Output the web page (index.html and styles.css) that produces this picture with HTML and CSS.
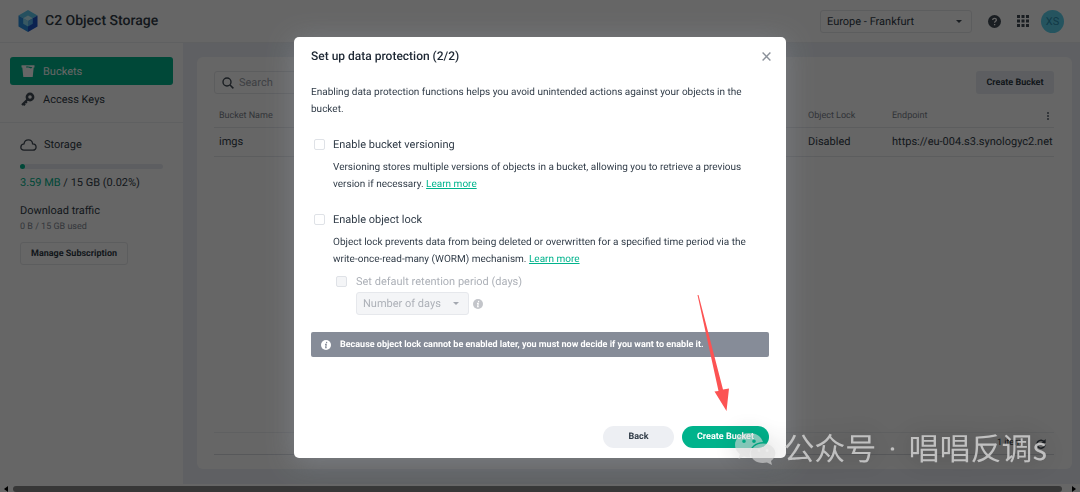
FILE: index.html
```
<!DOCTYPE html>
<html lang="en">
<head>
    <meta charset="UTF-8">
    <meta name="viewport" content="width=device-width, initial-scale=1.0">
    <title>C2 Object Storage</title>
    <link rel="stylesheet" href="styles.css">
</head>
<body>

    <div id="app">
        <header>
            <svg class="logo" viewBox="0 0 20 22">
                <path d="M10 0 L19.5 5.5 L10 11 L.5 5.5Z" fill="#5cc8ee"/>
                <path d="M.5 5.5 L10 11 V22 L.5 16.5Z" fill="#2a8fe0"/>
                <path d="M19.5 5.5 L10 11 V22 L19.5 16.5Z" fill="#1c55c8"/>
                <path d="M10 5.5 L14.8 8.2 L10 11 L5.2 8.2Z" fill="#c4f0fb"/>
                <path d="M5.2 8.2 L10 11 V16.4 L5.2 13.7Z" fill="#8adcf6"/>
                <path d="M14.8 8.2 L10 11 V16.4 L14.8 13.7Z" fill="#57b4ee"/>
            </svg>
            <h1>C2 Object Storage</h1>
            <div class="select region">
                <select aria-label="Region">
                    <option>Europe - Frankfurt</option>
                </select>
                <svg class="caret" viewBox="0 0 6 3"><path d="M0 0H6L3 3Z"/></svg>
            </div>
            <button class="icon-button" aria-label="Help">
                <svg width="13" height="13" viewBox="0 0 13 13">
                    <circle cx="6.5" cy="6.5" r="6.5" fill="#414b55"/>
                    <path d="M4.7 5.1C4.7 2.7 8.4 2.8 8.4 5C8.4 6.3 6.6 6.3 6.6 7.7M6.6 8.9V10.2" fill="none" stroke="#fff" stroke-width="1.3"/>
                </svg>
            </button>
            <button class="icon-button" aria-label="Apps">
                <svg width="12" height="12" viewBox="0 0 12 12" fill="#414b55">
                    <path d="M0 0h3v3H0zM4.5 0h3v3h-3zM9 0h3v3H9zM0 4.5h3v3H0zM4.5 4.5h3v3h-3zM9 4.5h3v3H9zM0 9h3v3H0zM4.5 9h3v3h-3zM9 9h3v3H9z"/>
                </svg>
            </button>
            <button class="avatar">XS</button>
        </header>

        <div id="content">
            <aside>
                <nav>
                    <a href="#" class="active">
                        <svg width="14" height="14" viewBox="0 0 14 14" fill="#fff">
                            <path d="M.5 1.2H13.5V3.6H12.7L11.7 13H2.3L1.3 3.6H.5Z"/>
                            <path d="M5.5 2.2L11.5 3.2L10 4.6L7.5 3.6H5Z" fill="#00b38c"/>
                        </svg>
                        Buckets
                    </a>
                    <a href="#">
                        <svg width="14" height="14" viewBox="0 0 14 14">
                            <circle cx="9" cy="5" r="3.1" fill="none" stroke="#414b55" stroke-width="2.6"/>
                            <path d="M6.5 7.5L1 13M2.2 11.4L4 13.2M4.2 9.4L5.8 11" fill="none" stroke="#414b55" stroke-width="2.2"/>
                        </svg>
                        Access Keys
                    </a>
                </nav>
                <div class="usage">
                    <div class="storage">
                        <svg width="17" height="12" viewBox="0 0 17 12">
                            <path d="M4 11.2C-.2 11.2-.2 5.2 4 4.8C5 -.4 12-.2 12.6 4.8C17.2 4.8 17.2 11.2 12.8 11.2Z" fill="none" stroke="#414b55" stroke-width="1.3"/>
                        </svg>
                        Storage
                    </div>
                    <div class="bar"><div class="bar-fill"></div></div>
                    <div class="amount"><span>3.59 MB</span> / 15 GB (0.02%)</div>
                    <div class="traffic">Download traffic</div>
                    <div class="used">0 B / 15 GB used</div>
                    <button class="manage">Manage Subscription</button>
                </div>
            </aside>

            <main>
                <section class="card">
                    <div class="toolbar">
                        <label class="search">
                            <svg width="12" height="12" viewBox="0 0 12 12">
                                <circle cx="5" cy="5" r="4" fill="none" stroke="#414b55" stroke-width="1.4"/>
                                <path d="M8 8L11.4 11.4" stroke="#414b55" stroke-width="1.5"/>
                            </svg>
                            <input type="text" placeholder="Search" aria-label="Search">
                        </label>
                        <button class="create">Create Bucket</button>
                    </div>
                    <table>
                        <thead>
                            <tr>
                                <th class="name">Bucket Name</th>
                                <th class="lock">Object Lock</th>
                                <th class="endpoint"><div>Endpoint
                                    <svg width="2" height="8" viewBox="0 0 2 8" fill="#828994"><path d="M0 0h2v2H0zM0 3h2v2H0zM0 6h2v2H0z"/></svg>
                                </div></th>
                            </tr>
                        </thead>
                        <tbody>
                            <tr>
                                <td>imgs</td>
                                <td>Disabled</td>
                                <td>https://eu-004.s3.synologyc2.net</td>
                            </tr>
                        </tbody>
                    </table>
                    <div class="pager">
                        1 item
                        <svg width="10" height="10" viewBox="0 0 10 10">
                            <path d="M8.4 3A4 4 0 1 0 9 5.6" fill="none" stroke="#414b55" stroke-width="1.5"/>
                            <path d="M9.6 0V4H5.6Z" fill="#414b55"/>
                        </svg>
                    </div>
                </section>
            </main>
        </div>

        <div class="scrollbar">
            <svg width="4" height="6" viewBox="0 0 4 6"><path d="M4 0V6L0 3Z"/></svg>
            <div class="thumb"></div>
            <svg width="4" height="6" viewBox="0 0 4 6"><path d="M0 0V6L4 3Z"/></svg>
        </div>
    </div>

    <div id="overlay">
        <form class="dialog" role="dialog" aria-labelledby="dialogTitle">
            <div class="dialog-head">
                <h2 id="dialogTitle">Set up data protection (2/2)</h2>
                <button type="button" class="close" aria-label="Close">
                    <svg width="9" height="9" viewBox="0 0 9 9"><path d="M.6 .6L8.4 8.4M8.4 .6L.6 8.4" stroke="#8b919a" stroke-width="1.4"/></svg>
                </button>
            </div>
            <p>Enabling data protection functions helps you avoid unintended actions against your objects in the bucket.</p>

            <div class="option">
                <input type="checkbox" id="versioning">
                <label for="versioning">Enable bucket versioning</label>
                <p>Versioning stores multiple versions of objects in a bucket, allowing you to retrieve a previous version if necessary. <a href="#">Learn more</a></p>
            </div>

            <div class="option">
                <input type="checkbox" id="objectLock">
                <label for="objectLock">Enable object lock</label>
                <p>Object lock prevents data from being deleted or overwritten for a specified time period via the write-once-read-many (WORM) mechanism. <a href="#">Learn more</a></p>
                <div class="retention">
                    <input type="checkbox" id="retention" disabled>
                    <label for="retention">Set default retention period (days)</label>
                    <div class="period">
                        <div class="select">
                            <select aria-label="Number of days" disabled>
                                <option>Number of days</option>
                            </select>
                            <svg class="caret" viewBox="0 0 6 3"><path d="M0 0H6L3 3Z"/></svg>
                        </div>
                        <svg width="10" height="10" viewBox="0 0 10 10">
                            <circle cx="5" cy="5" r="5" fill="#c3c5ca"/>
                            <path d="M5.7 1.9L5.5 3.1M4 4.3H5.2L4.7 7.6H5.7" fill="none" stroke="#fff" stroke-width="1.2"/>
                        </svg>
                    </div>
                </div>
            </div>

            <div class="notice">
                <svg width="10" height="10" viewBox="0 0 10 10">
                    <circle cx="5" cy="5" r="5" fill="#fff"/>
                    <path d="M5.7 1.9L5.5 3.1M4 4.3H5.2L4.7 7.6H5.7" fill="none" stroke="#868c98" stroke-width="1.2"/>
                </svg>
                Because object lock cannot be enabled later, you must now decide if you want to enable it.
            </div>

            <div class="actions">
                <button type="button">Back</button>
                <button type="button" class="primary">Create Bucket</button>
            </div>
        </form>
    </div>

    <svg class="arrow" width="34" height="118" viewBox="0 0 34 118">
        <path d="M.5 0L1.5 0L26 94.5L32 93.5L29.5 116L17.5 96.5L21.5 96Z" fill="#fc5353"/>
    </svg>

    <div class="watermark">
        <svg width="42" height="34" viewBox="0 0 42 34" fill="#dadada">
            <path fill-rule="evenodd" d="M15 1C6.500 1 1 6.500 1 13C1 17 3 20 6 22L4.500 27L10 24.500Q13 25.500 16 25C14 15 22 10 29 10C27 4 22 1 15 1ZM10 7.500a1.800 1.800 0 1 1 0 3.600a1.800 1.800 0 1 1 0-3.600ZM20 7.500a1.800 1.800 0 1 1 0 3.600a1.800 1.800 0 1 1 0-3.600Z"/>
            <path fill-rule="evenodd" d="M29 11.500C22 11.500 17 16 17 21.500C17 28 24 32.500 33 30.500L38 33L37 29C46 22 40 11.500 29 11.500ZM25 17a1.500 1.500 0 1 1 0 3a1.500 1.500 0 1 1 0-3ZM33 17a1.500 1.500 0 1 1 0 3a1.500 1.500 0 1 1 0-3Z"/>
        </svg>
        <div>公众号<span class="dot">·</span>唱唱反调s</div>
    </div>

</body>
</html>
```
FILE: styles.css
```
* {
    box-sizing: border-box;
}
body {
    margin: 0;
    font-family: Roboto, "Noto Sans CJK SC", sans-serif;
    font-size: 11px;
    line-height: 17px;
    color: #313c48;
    background-color: #fff;
    text-rendering: geometricPrecision;
}
button, input, select {
    font: inherit;
    color: inherit;
    margin: 0;
    text-rendering: inherit;
}
button {
    border: none;
    padding: 1px 0 0;
    background: none;
    font-size: 9px;
    font-weight: 700;
    cursor: pointer;
}
svg {
    display: block;
    flex: none;
}
h1, h2, p {
    margin: 0;
}
#app {
    min-height: 100vh;
    display: flex;
    flex-direction: column;
}
header {
    height: 43px;
    display: flex;
    align-items: center;
    padding: 0 16px 0 18px;
    border-bottom: 1px solid #edeff3;
}
.logo {
    width: 20px;
    height: 22px;
}
h1 {
    flex: 1;
    margin-left: 7px;
    font-size: 14px;
    font-weight: 500;
}
.select {
    position: relative;
    width: 113px;
    height: 23px;
    border: 1px solid #e6e8ec;
    border-radius: 3px;
}
.select select {
    appearance: none;
    display: block;
    width: 100%;
    height: 100%;
    padding: 0 6px;
    border: none;
    background: none;
    opacity: 1;
}
.caret {
    position: absolute;
    right: 9px;
    top: 9px;
    width: 6px;
    height: 3px;
    fill: #414b55;
}
.region {
    width: 152px;
}
.icon-button {
    margin-left: 16px;
    padding: 0;
}
.avatar {
    width: 23px;
    height: 23px;
    margin-left: 12px;
    padding: 0;
    border-radius: 50%;
    background-color: #5cd2ee;
    color: #2c8fb0;
    font-size: 11px;
    font-weight: 400;
}
#content {
    flex: 1;
    display: flex;
}
aside {
    width: 183px;
}
nav {
    padding: 14px 10px 9px;
    border-bottom: 1px solid #edeff3;
}
nav a {
    display: flex;
    align-items: center;
    gap: 8px;
    height: 28px;
    padding: 0 11px;
    border-radius: 3px;
    color: inherit;
    text-decoration: none;
}
nav a.active {
    background-color: #00b38c;
    color: #fff;
}
.usage {
    padding: 13px 20px;
}
.storage {
    display: flex;
    align-items: center;
    gap: 7px;
}
.bar {
    height: 5px;
    margin: 11px 0 5px;
    border-radius: 3px;
    background-color: #e9ecf2;
}
.bar-fill {
    width: 5px;
    height: 5px;
    border-radius: 3px;
    background-color: #00b38c;
}
.amount span {
    color: #00b38c;
}
.traffic {
    margin-top: 11px;
}
.used {
    font-size: 9px;
    line-height: 16px;
    color: #828994;
}
.manage {
    height: 23px;
    margin-top: 7px;
    padding: 1px 10px 0;
    border: 1px solid #e6e8ec;
    border-radius: 3px;
}
main {
    flex: 1;
    display: flex;
    padding: 14px 8px 15px 14px;
    background-color: #edf1f7;
}
.card {
    flex: 1;
    display: flex;
    flex-direction: column;
    padding: 14px 18px 14px 17px;
    border-radius: 6px;
    background-color: #fff;
}
.toolbar {
    display: flex;
    justify-content: space-between;
}
.search {
    width: 180px;
    height: 23px;
    display: flex;
    align-items: center;
    gap: 5px;
    padding: 0 7px;
    border: 1px solid #e6e8ec;
    border-radius: 3px;
}
.search input {
    width: 100%;
    padding: 0;
    border: none;
    background: none;
}
.search input::placeholder {
    color: #9ba0a8;
}
.create {
    width: 78px;
    height: 23px;
    border-radius: 3px;
    background-color: #e9ecf2;
}
table {
    width: 100%;
    margin-top: 9px;
    border-collapse: collapse;
    table-layout: fixed;
}
th, td {
    height: 29px;
    padding: 0 5px;
    border-bottom: 1px solid #e6e8ec;
    text-align: left;
    font-weight: 400;
    white-space: nowrap;
}
th {
    height: 24px;
    padding-top: 3px;
    font-size: 9px;
    color: #7c838d;
}
th div {
    display: flex;
    align-items: center;
    justify-content: space-between;
}
.lock {
    width: 84px;
}
.endpoint {
    width: 167px;
}
.pager {
    height: 23px;
    margin-top: auto;
    padding: 0 8px;
    display: flex;
    align-items: center;
    justify-content: flex-end;
    gap: 14px;
    border-top: 1px solid #edeff3;
    border-bottom: 1px solid #d9dce2;
    font-size: 9px;
}
.scrollbar {
    height: 8px;
    display: flex;
    align-items: center;
    gap: 5px;
    padding: 2px 4px 0;
}
.scrollbar .thumb {
    flex: 1;
    height: 6px;
    margin-right: 5px;
    border-radius: 3px;
    background-color: #8b8b8b;
}
#overlay {
    position: fixed;
    inset: 0;
    display: flex;
    align-items: flex-start;
    justify-content: center;
    padding-top: 37px;
    background-color: rgba(0, 0, 0, 0.6);
}
.dialog {
    width: 492px;
    padding: 11px 17px 10px;
    border-radius: 5px;
    background-color: #fff;
    box-shadow: 0 4px 28px rgba(160, 172, 190, 0.35);
}
.dialog-head {
    display: flex;
    align-items: center;
    justify-content: space-between;
    margin-bottom: 19px;
}
.close {
    margin-right: -2px;
    padding: 0;
}
h2 {
    font-size: 12px;
    font-weight: 500;
    color: #1d2733;
}
.dialog p {
    font-size: 10px;
}
.option {
    display: grid;
    grid-template-columns: 12px 1fr;
    column-gap: 10px;
    row-gap: 6px;
    align-items: center;
    margin-top: 18px;
}
.option > input {
    margin-left: 3px;
}
.option p, .retention {
    grid-column: 2;
}
.option a {
    color: #00b38c;
}
input[type="checkbox"] {
    appearance: none;
    width: 11px;
    height: 11px;
    border: 1px solid #dfe2e7;
    border-radius: 2px;
    background-color: #fff;
}
input[type="checkbox"]:disabled {
    background-color: #f4f5f7;
}
.retention {
    display: grid;
    grid-template-columns: 11px 1fr;
    column-gap: 9px;
    row-gap: 2px;
    align-items: center;
    margin-top: -1px;
    padding-left: 3px;
    color: #adb1b8;
}
.period {
    grid-column: 2;
    display: flex;
    align-items: center;
    gap: 4px;
}
.period .select {
    background-color: #f4f5f7;
}
.period .caret {
    fill: #a3a8b0;
}
.notice {
    display: flex;
    align-items: center;
    gap: 9px;
    height: 25px;
    margin-top: 17px;
    padding: 0 10px;
    border-radius: 2px;
    background-color: #868c98;
    color: #fff;
    font-size: 9px;
    line-height: 18px;
    font-weight: 700;
}
.actions {
    display: flex;
    justify-content: flex-end;
    gap: 8px;
    margin-top: 69px;
}
.actions button {
    width: 71px;
    height: 22px;
    border-radius: 11px;
    background-color: #edeff3;
}
.actions .primary {
    width: 87px;
    background-color: #00b38c;
    color: #fff;
}
.arrow {
    position: absolute;
    left: 697px;
    top: 295px;
}
.watermark {
    position: absolute;
    right: 33px;
    bottom: 22px;
    display: flex;
    align-items: center;
    gap: 7px;
    font-family: "Noto Sans CJK SC", sans-serif;
    font-size: 31px;
    line-height: 40px;
    color: #d0d0d0;
    opacity: 0.85;
    filter: drop-shadow(0 0 12px rgba(0, 0, 0, 0.3));
}
.watermark svg {
    opacity: 0.7;
}
.dot {
    padding: 0 12px;
    font-family: Roboto, sans-serif;
}
```
